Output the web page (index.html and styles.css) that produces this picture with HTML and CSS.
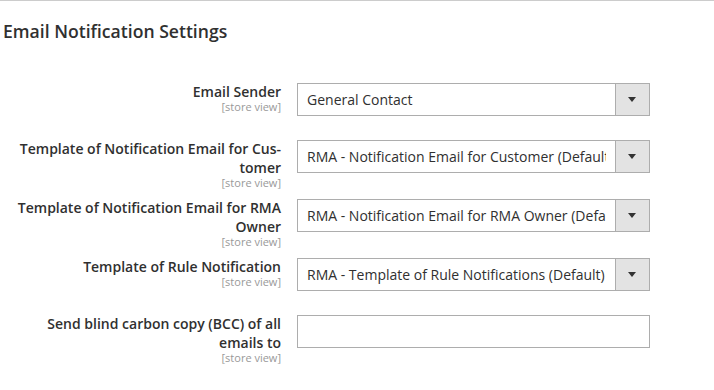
FILE: index.html
```html
<!DOCTYPE html>
<html lang="en">
<head>
  <meta charset="UTF-8" />
  <title>Email Notification Settings</title>
  <link rel="stylesheet" href="styles.css">
</head>
<body>
  <section class="settings">
    <h2 class="settings-title">Email Notification Settings</h2>

    <div class="field">
      <div class="field-label">
        <span class="label-text">Email Sender</span>
        <span class="scope">[store view]</span>
      </div>
      <div class="select">
        <span class="select-value">General Contact</span>
        <span class="select-arrow"></span>
      </div>
    </div>

    <div class="field">
      <div class="field-label">
        <span class="label-text">Template of Notification Email for Cus&shy;tomer</span>
        <span class="scope">[store view]</span>
      </div>
      <div class="select">
        <span class="select-value">RMA - Notification Email for Customer (Default)</span>
        <span class="select-arrow"></span>
      </div>
    </div>

    <div class="field">
      <div class="field-label">
        <span class="label-text">Template of Notification Email for RMA Owner</span>
        <span class="scope">[store view]</span>
      </div>
      <div class="select">
        <span class="select-value">RMA - Notification Email for RMA Owner (Default)</span>
        <span class="select-arrow"></span>
      </div>
    </div>

    <div class="field">
      <div class="field-label">
        <span class="label-text">Template of Rule Notification</span>
        <span class="scope">[store view]</span>
      </div>
      <div class="select">
        <span class="select-value">RMA - Template of Rule Notifications (Default)</span>
        <span class="select-arrow"></span>
      </div>
    </div>

    <div class="field">
      <div class="field-label">
        <span class="label-text">Send blind carbon copy (BCC) of all emails to</span>
        <span class="scope">[store view]</span>
      </div>
      <input class="text-input" type="text" value="">
    </div>
  </section>
</body>
</html>
```

FILE: styles.css
```css
:root {
  --text: #303030;
  --muted: #999999;
  --border: #adadad;
  --arrow-bg: #e3e3e3;
  --font: 'Open Sans', 'Noto Sans', sans-serif;
}

body {
  margin: 0;
  font-family: var(--font);
  color: var(--text);
  background: #ffffff;
}

.settings {
  border-top: 1px solid #cccccc;
}

.settings-title {
  margin: 0;
  padding: 18px 0 0 3px;
  height: 82px;
  box-sizing: border-box;
  font-size: 17.6px;
  font-weight: 600;
  line-height: 24px;
  color: #303030;
}

.field {
  display: grid;
  grid-template-columns: 281px 353px;
  column-gap: 16px;
  align-items: start;
  min-height: 47px;
  margin-bottom: 10px;
}

.field-label {
  text-align: right;
  margin-top: -1px;
}

.label-text {
  display: block;
  font-size: 14px;
  font-weight: 600;
  line-height: 19px;
}

.scope {
  display: block;
  font-size: 11px;
  line-height: 12px;
  color: var(--muted);
}

.select {
  display: flex;
  height: 33px;
  padding-left: 9px;
  border: 1px solid var(--border);
  box-sizing: border-box;
  background: #ffffff;
}

.select-value {
  flex: 1;
  min-width: 0;
  margin-right: 9px;
  overflow: hidden;
  white-space: nowrap;
  font-size: 14px;
  line-height: 31px;
}

.select-arrow {
  width: 33px;
  border-left: 1px solid var(--border);
  background: var(--arrow-bg);
  position: relative;
}

.select-arrow::after {
  content: "";
  position: absolute;
  left: 12px;
  top: 13px;
  border-left: 4px solid transparent;
  border-right: 4px solid transparent;
  border-top: 5px solid #333333;
}

.text-input {
  margin: 0;
  height: 33px;
  width: 353px;
  box-sizing: border-box;
  border: 1px solid var(--border);
  border-radius: 0;
  padding: 0 9px;
  font-family: var(--font);
  font-size: 14px;
}
```
